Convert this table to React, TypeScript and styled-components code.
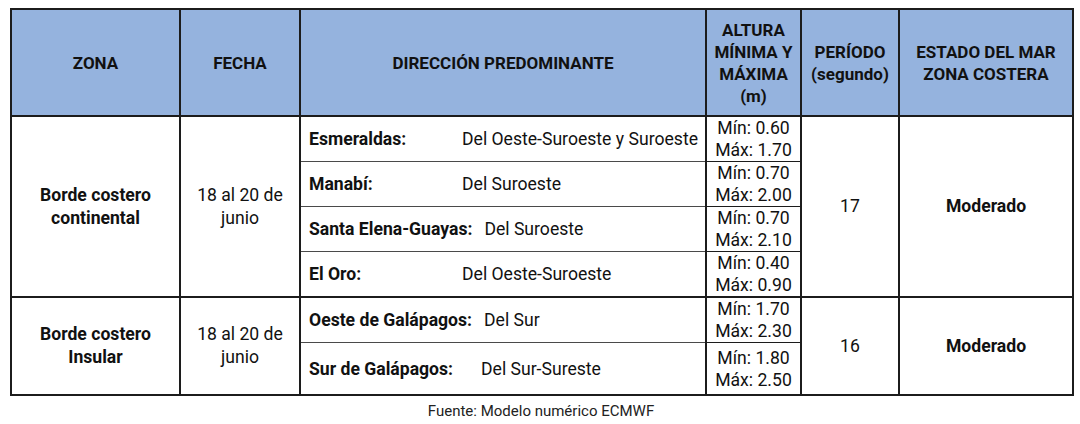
import React from "react";
import styled, { createGlobalStyle } from "styled-components";

interface Direction {
  place: string;
  wind: string;
  min: string;
  max: string;
}

interface Zone {
  name: string[];
  date: string[];
  labelWidth: number;
  period: string;
  state: string;
  rows: Direction[];
  lastRowHeight?: number;
}

const zones: Zone[] = [
  {
    name: ["Borde costero", "continental"],
    date: ["18 al 20 de", "junio"],
    labelWidth: 141,
    period: "17",
    state: "Moderado",
    rows: [
      { place: "Esmeraldas:", wind: "Del Oeste-Suroeste y Suroeste", min: "0.60", max: "1.70" },
      { place: "Manabí:", wind: "Del Suroeste", min: "0.70", max: "2.00" },
      { place: "Santa Elena-Guayas:", wind: "Del Suroeste", min: "0.70", max: "2.10" },
      { place: "El Oro:", wind: "Del Oeste-Suroeste", min: "0.40", max: "0.90" },
    ],
  },
  {
    name: ["Borde costero", "Insular"],
    date: ["18 al 20 de", "junio"],
    labelWidth: 160,
    period: "16",
    state: "Moderado",
    lastRowHeight: 51,
    rows: [
      { place: "Oeste de Galápagos:", wind: "Del Sur", min: "1.70", max: "2.30" },
      { place: "Sur de Galápagos:", wind: "Del Sur-Sureste", min: "1.80", max: "2.50" },
    ],
  },
];

const GlobalStyle = createGlobalStyle`
  body {
    margin: 0;
    background: #ffffff;
    font-family: Roboto, "Liberation Sans", sans-serif;
    color: #111111;
  }
`;

const Page = styled.div`
  padding: 8px 8px 0 10px;
`;

const Table = styled.table`
  width: 1062px;
  border-collapse: collapse;
  table-layout: fixed;
  border: 2px solid #1c1c1c;
  font-size: 17.6px;
`;

const HeadCell = styled.th<{ $w: number }>`
  box-sizing: border-box;
  width: ${(p) => p.$w}px;
  height: 107px;
  padding: 0 2px;
  background: #95b3de;
  border: 2px solid #1c1c1c;
  font-weight: 700;
  font-size: 17px;
  line-height: 22px;
  text-align: center;
  vertical-align: middle;
`;

const Cell = styled.td<{ $bold?: boolean }>`
  border: 2px solid #1c1c1c;
  text-align: center;
  vertical-align: middle;
  line-height: 23px;
  font-weight: ${(p) => (p.$bold ? 700 : 400)};
  padding: 0 2px;
`;

const DirCell = styled.td<{ $h: number; $last: boolean }>`
  height: ${(p) => p.$h}px;
  padding: 0 0 0 8px;
  border-left: 2px solid #1c1c1c;
  border-right: 2px solid #1c1c1c;
  border-bottom: ${(p) => (p.$last ? "2px solid #1c1c1c" : "1px solid #4a4a4a")};
  vertical-align: middle;
`;

const DirLine = styled.div`
  display: flex;
  align-items: baseline;
  gap: 12px;
  white-space: nowrap;
`;

const Place = styled.span<{ $w: number }>`
  min-width: ${(p) => p.$w}px;
  font-weight: 700;
`;

const RangeCell = styled.td<{ $last: boolean }>`
  padding: 0;
  text-align: center;
  line-height: 22px;
  border-left: 2px solid #1c1c1c;
  border-right: 2px solid #1c1c1c;
  border-bottom: ${(p) => (p.$last ? "2px solid #1c1c1c" : "1px solid #1c1c1c")};
  vertical-align: middle;
`;

const Source = styled.p`
  width: 1062px;
  margin: 6px 0 0;
  text-align: center;
  font-size: 15px;
  color: #222;
`;

const Lines = ({ lines }: { lines: string[] }) => (
  <>
    {lines.map((l, i) => (
      <React.Fragment key={i}>
        {i > 0 && <br />}
        {l}
      </React.Fragment>
    ))}
  </>
);

export default function App() {
  return (
    <Page>
      <GlobalStyle />
      <Table>
        <thead>
          <tr>
            <HeadCell $w={169}>ZONA</HeadCell>
            <HeadCell $w={120}>FECHA</HeadCell>
            <HeadCell $w={406}>DIRECCIÓN PREDOMINANTE</HeadCell>
            <HeadCell $w={95}>
              <Lines lines={["ALTURA", "MÍNIMA Y", "MÁXIMA", "(m)"]} />
            </HeadCell>
            <HeadCell $w={98}>
              <Lines lines={["PERÍODO", "(segundo)"]} />
            </HeadCell>
            <HeadCell $w={174}>
              <Lines lines={["ESTADO DEL MAR", "ZONA COSTERA"]} />
            </HeadCell>
          </tr>
        </thead>
        <tbody>
          {zones.map((z) =>
            z.rows.map((r, i) => {
              const last = i === z.rows.length - 1;
              const h = last && z.lastRowHeight ? z.lastRowHeight : 44;
              return (
                <tr key={z.name.join() + i}>
                  {i === 0 && (
                    <>
                      <Cell $bold rowSpan={z.rows.length}>
                        <Lines lines={z.name} />
                      </Cell>
                      <Cell rowSpan={z.rows.length}>
                        <Lines lines={z.date} />
                      </Cell>
                    </>
                  )}
                  <DirCell $h={h} $last={last}>
                    <DirLine>
                      <Place $w={z.labelWidth}>{r.place}</Place>
                      <span>{r.wind}</span>
                    </DirLine>
                  </DirCell>
                  <RangeCell $last={last}>
                    Mín: {r.min}
                    <br />
                    Máx: {r.max}
                  </RangeCell>
                  {i === 0 && (
                    <>
                      <Cell rowSpan={z.rows.length}>{z.period}</Cell>
                      <Cell $bold rowSpan={z.rows.length}>
                        {z.state}
                      </Cell>
                    </>
                  )}
                </tr>
              );
            })
          )}
        </tbody>
      </Table>
      <Source>Fuente: Modelo numérico ECMWF</Source>
    </Page>
  );
}
